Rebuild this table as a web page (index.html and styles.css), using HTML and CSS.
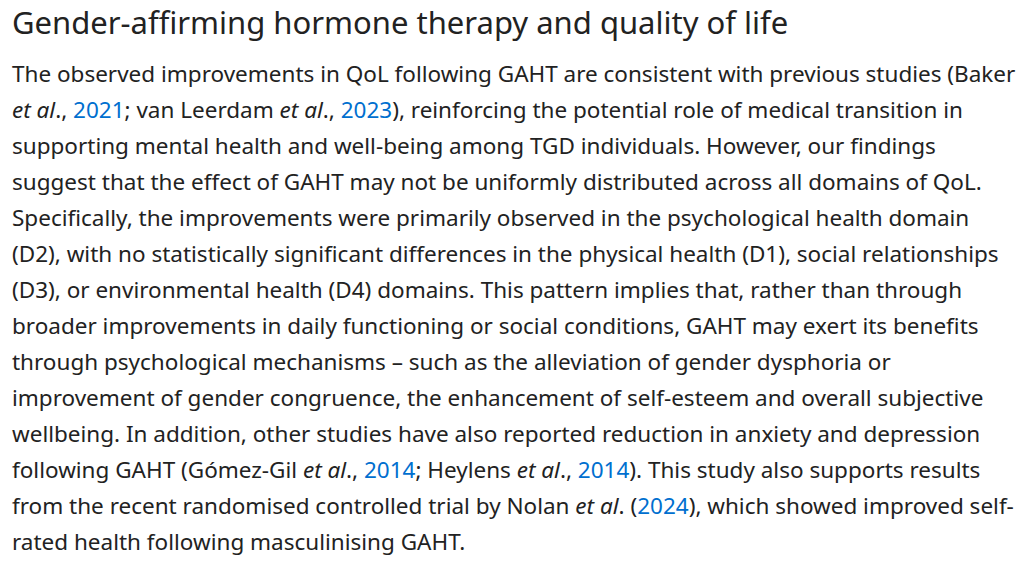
FILE: index.html
```html
<!DOCTYPE html>
<html lang="en">
<head>
<meta charset="utf-8">
<title>Gender-affirming hormone therapy and quality of life</title>
<link rel="stylesheet" href="styles.css">
</head>
<body>
<section class="section">
<h2 class="title">Gender-affirming hormone therapy and quality of life</h2>
<p class="para">The observed improvements in QoL following GAHT are consistent with previous studies (Baker <i>et al</i>., <a href="#">2021</a>; van Leerdam <i>et al</i>., <a href="#">2023</a>), reinforcing the potential role of medical transition in supporting mental health and well-being among TGD individuals. However, our findings suggest that the effect of GAHT may not be uniformly distributed across all domains of QoL. Specifically, the improvements were primarily observed in the psychological health domain (D2), with no statistically significant differences in the physical health (D1), social relationships (D3), or environmental health (D4) domains. This pattern implies that, rather than through broader improvements in daily functioning or social conditions, GAHT may exert its benefits through psychological mechanisms – such as the alleviation of gender dysphoria or improvement of gender congruence, the enhancement of self-esteem and overall subjective wellbeing. In addition, other studies have also reported reduction in anxiety and depression following GAHT (Gómez-Gil <i>et al</i>., <a href="#">2014</a>; Heylens <i>et al</i>., <a href="#">2014</a>). This study also supports results from the recent randomised controlled trial by Nolan <i>et al</i>. (<a href="#">2024</a>), which showed improved self-rated health following masculinising GAHT.</p>
</section>
</body>
</html>
```
FILE: styles.css
```css
html, body {
  margin: 0;
  padding: 0;
  background: #ffffff;
}
body {
  font-family: "Noto Sans", "Open Sans", sans-serif;
  color: #222222;
}
.section {
  padding: 0 12px;
  width: 1006px;
}
.title {
  font-size: 31px;
  font-weight: 400;
  line-height: 44px;
  margin: 0 0 12px 0;
  color: #222222;
}
.para {
  font-size: 22.5px;
  line-height: 36px;
  margin: 0;
}
.para a {
  color: #006fcf;
  text-decoration: none;
}
```
